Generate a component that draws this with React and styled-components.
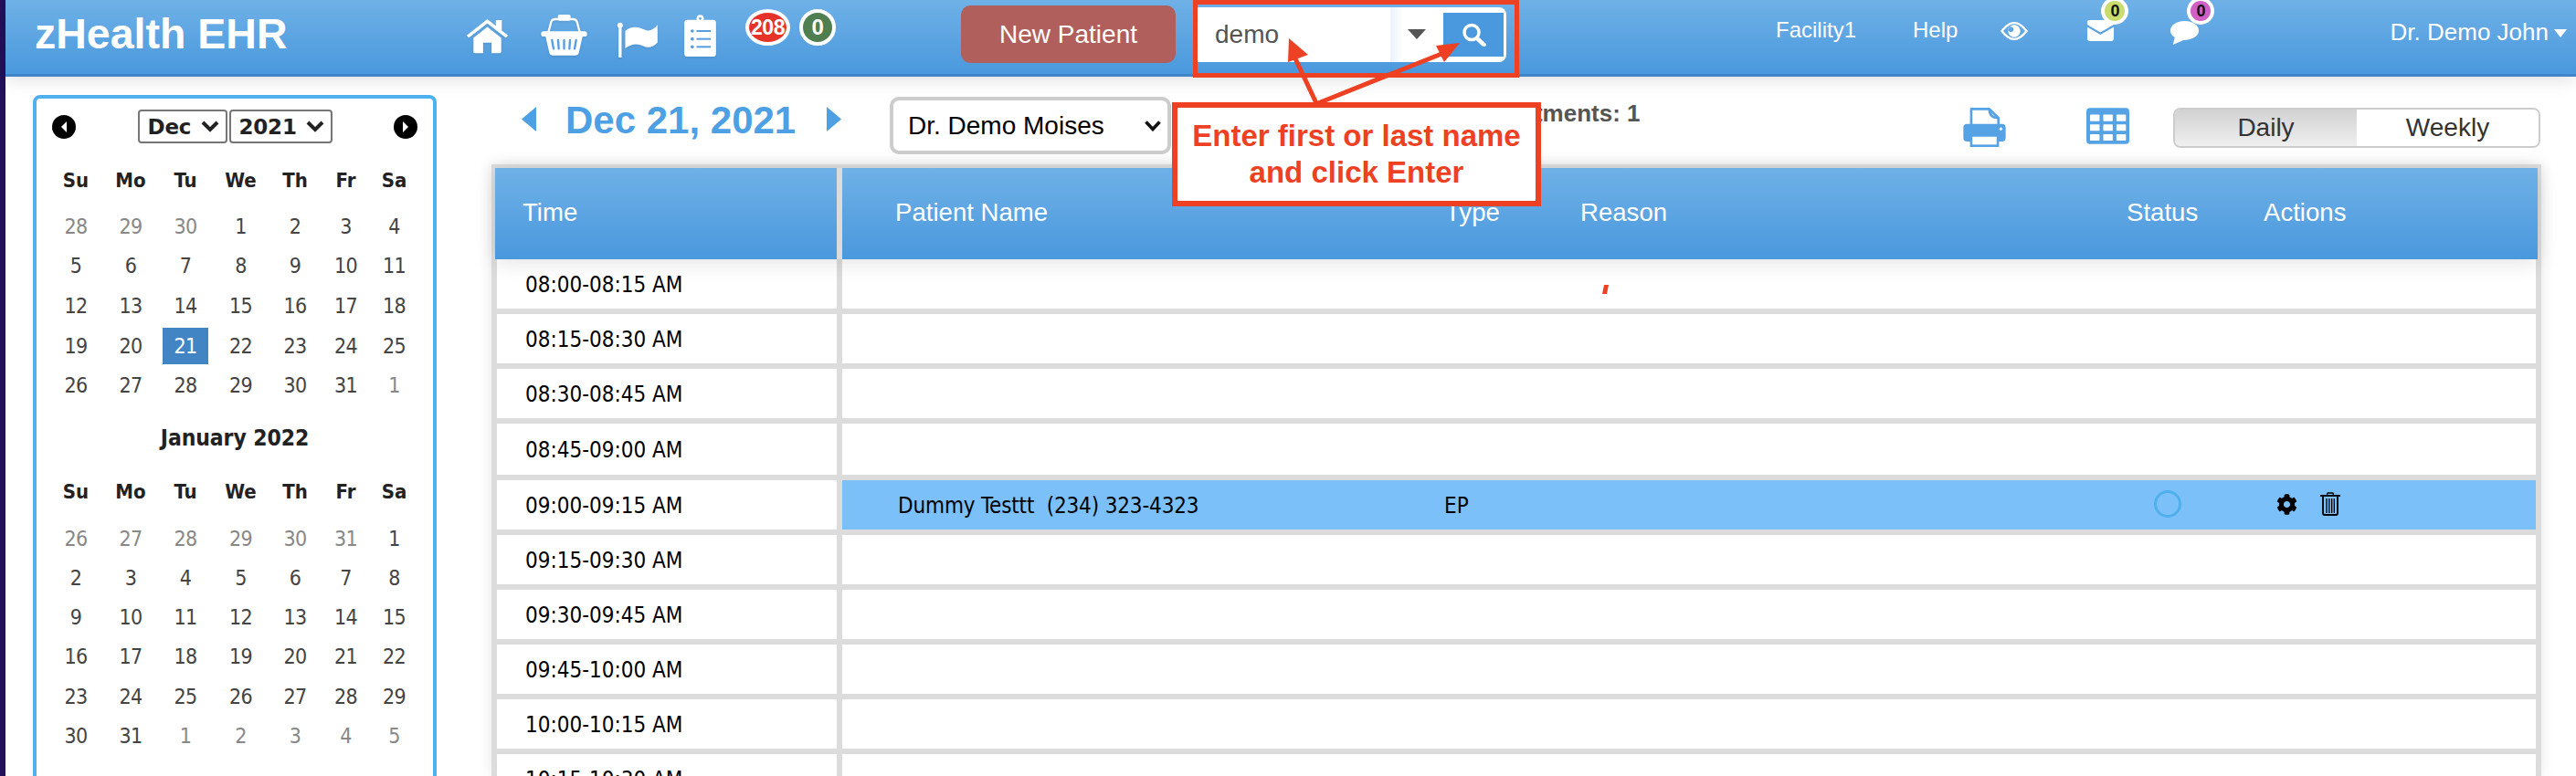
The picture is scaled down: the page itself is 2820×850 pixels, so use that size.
import React from "react";
import styled, { createGlobalStyle } from "styled-components";
import { FaCog } from "react-icons/fa";

const Global = createGlobalStyle`
  html, body { margin: 0; padding: 0; background: #fff; overflow: hidden; }
  * { box-sizing: border-box; }
`;
const SANS = `"Liberation Sans", Arial, sans-serif`;
const TAHOMA = `"DejaVu Sans Condensed", "DejaVu Sans", sans-serif`;
const BAR = `linear-gradient(to bottom, #6fb1e7 0%, #4a98dd 100%)`;

const Page = styled.div`
  position: relative; width: 2820px; height: 850px; overflow: hidden;
  display: flex; font-family: ${SANS}; background: #fff;
`;
const Strip = styled.div`width: 6px; flex: none; background: #22105c;`;
const Main = styled.div`flex: 1; display: flex; flex-direction: column; min-width: 0;`;

/* ---------- top bar ---------- */
const TopBar = styled.header`
  position: relative; z-index: 2; height: 84px; flex: none; display: flex; align-items: flex-start;
  background: ${BAR}; border-bottom: 3px solid #4085c9; box-shadow: 0 3px 18px rgba(0,0,0,.13);
  color: #fff;
`;
const Brand = styled.div`
  width: 498px; flex: none; padding: 10px 0 0 32px; font-size: 46.5px; line-height: 54px; font-weight: 700; white-space: nowrap;
`;
const IconNav = styled.nav`width: 546px; flex: none; display: flex; align-items: flex-start; padding-left: 6px;`;
const NavIcon = styled.a`display: block; flex: none; margin-left: ${p => p.$ml}px; margin-top: ${p => p.$mt}px; line-height: 0;
  svg { display: block; filter: drop-shadow(0 1px 1px rgba(0,0,0,.1)); }`;
const CountBadge = styled.span`
  flex: none; height: 40px; width: ${p => p.$w}px; margin-top: 10px; margin-left: ${p => p.$ml}px; border-radius: 50%;
  border: 4px solid #fff; background: ${p => p.$bg}; color: #fff; font-size: ${p => p.$fs}px; font-weight: 700;
  display: flex; align-items: center; justify-content: center; letter-spacing: -.5px;
`;
const NewPatient = styled.button`
  flex: none; width: 235px; height: 63px; margin: 6px 0 0 2px; border: 0; border-radius: 10px; background: #b05f5d;
  color: #fff; font: 400 28px ${SANS};
`;
const SearchBox = styled.div`
  flex: none; width: 338px; height: 60px; margin: 8px 0 0 24px; display: flex; background: #fff;
  border-radius: 0 8px 8px 0; padding-right: 3px;
`;
const SearchInput = styled.input`
  width: 211px; height: 60px; flex: none; border: 0; outline: 0; background: #fff; padding: 0 0 0 19px;
  font: 400 28px ${SANS}; color: #555;
`;
const SearchCaret = styled.div`
  width: 58px; flex: none; display: flex; align-items: center; justify-content: center; padding-left: 0;
  background: linear-gradient(to right, #eaf3fb 0, #fff 14px);
  &::after { content: ""; border-style: solid; border-width: 11px 10px 0 10px; border-color: #555 transparent transparent; margin-top: -1px; }
`;
const SearchButton = styled.button`
  width: 66px; height: 48px; margin-top: 6px; flex: none; border: 0; padding: 0; background: #4a98dd;
  display: flex; align-items: center; justify-content: center;
`;
const TopLinks = styled.div`flex: none; margin-left: 295px; display: flex; align-items: flex-start;`;
const TopLink = styled.a`font-size: 24px; line-height: 28px; margin-top: 19px; margin-left: ${p => p.$ml || 0}px; color: #fff; white-space: nowrap;`;
const TopIcon = styled.div`
  position: relative; flex: none; width: ${p => p.$w}px; margin-left: ${p => p.$ml}px; margin-top: ${p => p.$mt}px; line-height: 0;
`;
const DotBadge = styled.span`
  position: absolute; top: ${p => p.$top}px; left: ${p => p.$left}px; width: 30px; height: 30px; border-radius: 50%;
  border: 4px solid #fff; background: ${p => p.$bg}; color: #111; font-size: 18px; line-height: 22px; font-weight: 700; text-align: center;
`;
const UserMenu = styled.div`
  margin-left: auto; margin-right: 10px; display: flex; align-items: center; margin-top: 20px; font-size: 26px; line-height: 30px; white-space: nowrap;
  &::after { content: ""; margin-left: 6px; margin-top: 3px; border-style: solid; border-width: 9px 7.5px 0 7.5px; border-color: #fff transparent transparent; }
`;

/* ---------- body ---------- */
const Body = styled.div`flex: 1; min-height: 0; display: flex; align-items: flex-start;`;
const SideCol = styled.aside`width: 532px; flex: none; padding: 20px 0 0 30px;`;
const Calendar = styled.div`
  width: 442px; height: 800px; border: 4px solid #4fb0ee; border-radius: 8px; background: #fff; padding-top: 12px;
  font-family: ${TAHOMA};
`;
const CalNav = styled.div`display: flex; align-items: center; height: 37px; padding: 0 0 0 17px;`;
const CalArrow = styled.span`
  flex: none; width: 26px; height: 26px; border-radius: 50%; background: #000; display: flex; align-items: center; justify-content: center;
  margin: ${p => p.$m};
  &::after { content: ""; border-style: solid; border-width: 6.5px ${p => p.$next ? "0 6.5px 6.5px" : "6.5px 6.5px 0"}; border-color: transparent ${p => p.$next ? "transparent transparent #fff" : "#fff transparent transparent"}; }
`;
const MonthWrap = styled.label`
  position: relative; flex: none; display: block; width: ${p => p.$w}px; height: 37px; margin-left: ${p => p.$ml}px;
`;
const MonthSelect = styled.select`
  appearance: none; width: 100%; height: 100%; background: #fff; border: 2px solid #767676; border-radius: 4px;
  padding: 0 0 0 9px; font: 700 23px "DejaVu Sans", sans-serif; color: #222; letter-spacing: -.2px;
`;
const Chevron = styled.svg`position: absolute; top: ${p => p.$top}px; right: ${p => p.$right}px; pointer-events: none;`;
const Grid = styled.div`
  display: grid; grid-template-columns: 60px 60px 60px 61px 58px 53px 53px; padding-left: 13px;
  justify-items: center; align-items: center;
`;
const WeekHead = styled(Grid)`
  height: 40px; margin-top: ${p => p.$mt}px; font-weight: 700; font-size: 22px; color: #222;
`;
const DayGrid = styled(Grid)`
  grid-auto-rows: ${p => p.$rh}px; margin-top: ${p => p.$mt}px; font-size: 23px; letter-spacing: -.6px;
`;
const Day = styled.span`
  color: ${p => (p.$sel ? "#fff" : p.$out ? "#888" : "#444")};
  background: ${p => (p.$sel ? "#4285c5" : "transparent")};
  width: 50px; height: 40px; line-height: 40px; text-align: center; display: block;
`;
const MonthTitle = styled.div`
  height: 40px; line-height: 40px; margin-top: 16px; font-size: 24.5px; font-weight: 700; color: #222; text-align: center; padding-left: 0; letter-spacing: -.1px;
`;

const Content = styled.section`width: 2244px; flex: none;`;
const Toolbar = styled.div`height: 96px; display: flex; align-items: flex-start; padding-top: 20px; margin-top: 0;`;
const DateArrow = styled.svg`flex: none; margin-left: ${p => p.$ml}px; margin-top: 13px;`;
const DateTitle = styled.h1`
  flex: none; width: 248px; margin: 5px 0 0 32px; font: 700 42px/46px ${SANS}; color: #4ea0e4; white-space: nowrap;
`;
const DoctorWrap = styled.label`position: relative; display: block; flex: none; width: 308px; height: 63px; margin: 2px 0 0 53px;`;
const DoctorSelect = styled.select`
  appearance: none; width: 100%; height: 100%; background: #fff; border: 4px solid #ccc; border-radius: 10px;
  padding: 0 0 0 16px; font: 400 28px ${SANS}; color: #000;
`;
const Total = styled.div`
  flex: none; margin: 5px 0 0 242px; width: 269px; font: 700 26px/30px ${SANS}; color: #555; white-space: nowrap;
`;
const ToolIcon = styled.a`flex: none; display: block; line-height: 0; margin-left: ${p => p.$ml}px; margin-top: 14px;`;
const Toggle = styled.div`
  flex: none; width: 402px; height: 44px; margin: 14px 0 0 48px; display: flex; border: 2px solid #ccc; border-radius: 8px; overflow: hidden;
`;
const ToggleItem = styled.div`
  flex: 1; display: flex; align-items: center; justify-content: center; font-size: 28px; color: #333;
  background: ${p => (p.$on ? "linear-gradient(to bottom,#d2d2d2,#efefef)" : "#fff")};
`;

const Frame = styled.div`
  background: #dcdcdc; padding: 4px 4px 0; height: 670px; box-shadow: 0 0 14px rgba(0,0,0,.1);
`;
const HeadRow = styled.div`
  position: relative; z-index: 1; display: grid; grid-template-columns: 374px 1fr; column-gap: 6px; height: 100px;
  box-shadow: 0 3px 22px rgba(0,0,0,.12); font-size: 27.6px; color: #fff;
`;
const HeadCell = styled.div`
  background: ${BAR}; display: ${p => (p.$cols ? "grid" : "flex")}; align-items: center; padding-left: ${p => p.$pl}px; padding-bottom: 2px;
  ${p => p.$cols && `grid-template-columns: 602px 148px 598px 150px 1fr;`}
`;
const Slots = styled.div`display: flex; flex-direction: column; row-gap: 6px; margin: 0 -2px 0 2px; width: 2232px;`;
const Slot = styled.div`
  display: grid; grid-template-columns: 372px 1fr; column-gap: 6px; height: ${p => p.$h}px; flex: none;
  font-family: ${TAHOMA}; font-size: 24px; color: #000;
`;
const TimeCell = styled.div`background: #fff; display: flex; align-items: center; padding: 2px 0 0 31px; white-space: nowrap;`;
const SlotCell = styled.div`
  background: ${p => (p.$busy ? "#7cc0f9" : "#fff")}; display: grid; align-items: center; padding: 2px 0 0 61px;
  grid-template-columns: 598px 747px 164px 1fr; white-space: pre; color: #000;
`;
const PatientLine = styled.span`letter-spacing: -.15px;`;
const Ring = styled.span`display: block; width: 30px; height: 30px; border-radius: 50%; border: 3px solid #4fb0ee; margin: -4px 0 0 30px;`;
const Actions = styled.div`display: flex; align-items: center; gap: 25px; margin: -4px 0 0 0; font-size: 23px; line-height: 0;`;

/* ---------- annotation overlays ---------- */
const Highlight = styled.div`
  position: absolute; left: 1306px; top: 0; width: 357px; height: 85px; border: 5px solid #ee4023; pointer-events: none; z-index: 5;
`;
const Callout = styled.div`
  position: absolute; left: 1283px; top: 112px; width: 404px; height: 114px; z-index: 6; background: #fff; border: 6px solid #ee4023;
  display: flex; align-items: center; justify-content: center; text-align: center;
  color: #ee4023; font: 700 33px/40px ${SANS};
`;
const ArrowLayer = styled.svg`position: absolute; left: 0; top: 0; z-index: 7; pointer-events: none;`;

/* ---------- icons ---------- */
const HomeIcon = () => (
  <svg width="47" height="38" viewBox="0 0 140 115" fill="#fff">
    <rect x="98" y="3" width="20" height="34" />
    <path d="M5 58 L70 7 L135 58" fill="none" stroke="#fff" strokeWidth="11" />
    <path d="M24 62 L70 26 L116 62 V108 Q116 113 111 113 H84 V78 H56 V113 H29 Q24 113 24 108 Z" />
  </svg>
);
const BasketIcon = () => (
  <svg width="51" height="45" viewBox="0 0 151 135" fill="#fff">
    <path d="M24 58 L33 24 Q36 15 46 15 H105 Q115 15 118 24 L127 58" fill="none" stroke="#fff" strokeWidth="7" />
    <rect x="55" y="0" width="42" height="20" rx="6" />
    <rect x="0" y="55" width="151" height="17" rx="8.5" />
    <path d="M14 68 H137 L124 125 Q122 134 112 134 H39 Q29 134 27 125 Z" />
    <g stroke="#559fe1" strokeWidth="7" strokeLinecap="round">
      <path d="M36 84 L41 112 M56 84 L58 112 M75.5 84 V112 M95 84 L93 112 M115 84 L110 112" />
    </g>
  </svg>
);
const FlagIcon = () => (
  <svg width="45" height="39" viewBox="0 0 135 118" fill="#fff">
    <rect x="6" y="10" width="10" height="108" />
    <circle cx="11" cy="11" r="9" />
    <path d="M28 30 C48 12 72 16 92 26 C108 33 122 26 135 10 V68 C122 84 104 88 88 80 C68 70 48 72 28 88 Z" />
  </svg>
);
const ClipIcon = () => (
  <svg width="35" height="46" viewBox="0 0 104 138">
    <rect y="17" width="104" height="121" rx="10" fill="#fff" />
    <circle cx="52" cy="13" r="12" fill="#fff" />
    <circle cx="52" cy="13" r="4" fill="#5ea5e3" />
    <g fill="#559fe1">
      <circle cx="26" cy="54" r="5.5" /><circle cx="26" cy="80" r="5.5" /><circle cx="26" cy="106" r="5.5" />
      <rect x="40" y="51" width="47" height="6" /><rect x="40" y="77" width="47" height="6" /><rect x="40" y="103" width="47" height="6" />
    </g>
  </svg>
);
const SearchIcon = () => (
  <svg width="27" height="26" viewBox="0 0 27 26" fill="none" stroke="#fff">
    <circle cx="11" cy="10.5" r="8" strokeWidth="3.5" />
    <path d="M17 17 L24.5 24" strokeWidth="4.5" strokeLinecap="round" />
  </svg>
);
const EyeIcon = () => (
  <svg width="30" height="20" viewBox="0 0 90 60" fill="#fff">
    <path fillRule="evenodd" d="M0 30 C16 9 30 0 45 0 C60 0 74 9 90 30 C74 51 60 60 45 60 C30 60 16 51 0 30 Z M9 30 C22 45 33 53 45 53 C57 53 68 45 81 30 C68 15 57 7 45 7 C33 7 22 15 9 30 Z" />
    <path fillRule="evenodd" d="M45 10 A20 20 0 1 1 44.9 10 Z M34 16 A9 9 0 1 0 34.1 16 Z" />
  </svg>
);
const MailIcon = () => (
  <svg width="29" height="23" viewBox="0 0 85 67">
    <path d="M0 6 Q0 0 6 0 H85 V60 Q85 67 78 67 H7 Q0 67 0 60 Z" fill="#fff" />
    <path d="M-2 17 L42 43 L87 17" fill="none" stroke="#57a0e2" strokeWidth="6" />
  </svg>
);
const ChatIcon = () => (
  <svg width="31" height="26" viewBox="0 0 92 77" fill="#fff">
    <ellipse cx="46" cy="31" rx="46" ry="31" />
    <path d="M15 50 L8 77 L48 60 Z" />
  </svg>
);
const PrintIcon = () => (
  <svg width="47" height="43" viewBox="0 0 140 130">
    <path d="M26 60 V4 H86 L116 34 V60 Z" fill="#fff" stroke="#55a2e4" strokeWidth="8" strokeLinejoin="round" />
    <path d="M86 4 C86 24 96 34 116 34" fill="none" stroke="#55a2e4" strokeWidth="8" />
    <rect x="0" y="54" width="140" height="58" rx="12" fill="#55a2e4" />
    <rect x="26" y="92" width="88" height="34" fill="#fff" stroke="#55a2e4" strokeWidth="8" />
    <circle cx="124" cy="70" r="5" fill="#fff" />
  </svg>
);
const GridIcon = () => (
  <svg width="47" height="40" viewBox="0 0 140 118">
    <rect width="140" height="118" rx="12" fill="#55a2e4" />
    <g fill="#fff">
      {[22, 54, 86].map(y => [12, 55, 98].map(x => <rect key={x + "-" + y} x={x} y={y} width="31" height="21" rx="2" />))}
    </g>
  </svg>
);
const TrashIcon = () => (
  <svg width="22" height="26" viewBox="0 0 66 76" fill="none" stroke="#000">
    <path d="M0 11 H66" strokeWidth="5.5" />
    <path d="M23 10 V5 Q23 2 26 2 H40 Q43 2 43 5 V10" strokeWidth="4.5" />
    <path d="M9 14 V68 Q9 74 15 74 H51 Q57 74 57 68 V14" strokeWidth="5.5" />
    <path d="M21 20 V68 M29.5 20 V68 M38 20 V68 M46 20 V68" strokeWidth="4" />
  </svg>
);

const WEEK = ["Su", "Mo", "Tu", "We", "Th", "Fr", "Sa"];
const DEC = [[28,1],[29,1],[30,1],1,2,3,4,5,6,7,8,9,10,11,12,13,14,15,16,17,18,19,20,21,22,23,24,25,26,27,28,29,30,31,[1,1]];
const JAN = [[26,1],[27,1],[28,1],[29,1],[30,1],[31,1],1,2,3,4,5,6,7,8,9,10,11,12,13,14,15,16,17,18,19,20,21,22,23,24,25,26,27,28,29,30,31,[1,1],[2,1],[3,1],[4,1],[5,1]];

const Days = ({ list, sel, ...rest }) => (
  <DayGrid {...rest}>
    {list.map((d, i) => {
      const out = Array.isArray(d);
      const n = out ? d[0] : d;
      return <Day key={i} $out={out} $sel={!out && n === sel}>{n}</Day>;
    })}
  </DayGrid>
);
const Week = ({ mt }) => <WeekHead $mt={mt}>{WEEK.map(w => <span key={w}>{w}</span>)}</WeekHead>;

const SLOTS = [
  ["08:00-08:15 AM", 54], ["08:15-08:30 AM", 54], ["08:30-08:45 AM", 54], ["08:45-09:00 AM", 56],
  ["09:00-09:15 AM", 54, true], ["09:15-09:30 AM", 54], ["09:30-09:45 AM", 54], ["09:45-10:00 AM", 54],
  ["10:00-10:15 AM", 54], ["10:15-10:30 AM", 54],
];

export default function App() {
  return (
    <Page>
      <Global />
      <Strip />
      <Main>
        <TopBar>
          <Brand>zHealth EHR</Brand>
          <IconNav>
            <NavIcon $ml={0} $mt={21}><HomeIcon /></NavIcon>
            <NavIcon $ml={35} $mt={16}><BasketIcon /></NavIcon>
            <NavIcon $ml={32} $mt={24}><FlagIcon /></NavIcon>
            <NavIcon $ml={29} $mt={16}><ClipIcon /></NavIcon>
            <CountBadge $w={49} $ml={32} $bg="#e5332a" $fs={23}>208</CountBadge>
            <CountBadge $w={40} $ml={10} $bg="#4f7f50" $fs={24}>0</CountBadge>
          </IconNav>
          <NewPatient>New Patient</NewPatient>
          <SearchBox>
            <SearchInput defaultValue="demo" />
            <SearchCaret />
            <SearchButton aria-label="Search"><SearchIcon /></SearchButton>
          </SearchBox>
          <TopLinks>
            <TopLink>Facility1</TopLink>
            <TopLink $ml={62}>Help</TopLink>
            <TopIcon $w={30} $ml={47} $mt={24}><EyeIcon /></TopIcon>
            <TopIcon $w={29} $ml={65} $mt={22}>
              <MailIcon />
              <DotBadge $top={-25} $left={15} $bg="#c9dc6e">0</DotBadge>
            </TopIcon>
            <TopIcon $w={31} $ml={62} $mt={23}>
              <ChatIcon />
              <DotBadge $top={-26} $left={18} $bg="#cf5fc5">0</DotBadge>
            </TopIcon>
          </TopLinks>
          <UserMenu>Dr. Demo John</UserMenu>
        </TopBar>

        <Body>
          <SideCol>
            <Calendar>
              <CalNav>
                <CalArrow />
                <MonthWrap $w={98.5} $ml={67.5}>
                  <MonthSelect defaultValue="Dec"><option>Dec</option></MonthSelect>
                  <Chevron $top={12} $right={9} width="20" height="13" viewBox="0 0 20 13" fill="none" stroke="#222" strokeWidth="4"><path d="M2 2 L10 10 L18 2" /></Chevron>
                </MonthWrap>
                <MonthWrap $w={113} $ml={1.5}>
                  <MonthSelect defaultValue="2021"><option>2021</option></MonthSelect>
                  <Chevron $top={12} $right={9} width="20" height="13" viewBox="0 0 20 13" fill="none" stroke="#222" strokeWidth="4"><path d="M2 2 L10 10 L18 2" /></Chevron>
                </MonthWrap>
                <CalArrow $next $m="0 0 0 67.5px" />
              </CalNav>
              <Week mt={20} />
              <Days list={DEC} sel={21} $rh={43.6} $mt={9} />
              <MonthTitle>January 2022</MonthTitle>
              <Week mt={18.6} />
              <Days list={JAN} $rh={43.3} $mt={9.4} />
            </Calendar>
          </SideCol>

          <Content>
            <Toolbar>
              <DateArrow $ml={33} width="16" height="27" viewBox="0 0 16 27" fill="#4ea0e4"><path d="M16 0 V27 L0 13.5 Z" /></DateArrow>
              <DateTitle>Dec 21, 2021</DateTitle>
              <DateArrow $ml={38} width="16" height="27" viewBox="0 0 16 27" fill="#4ea0e4"><path d="M0 0 V27 L16 13.5 Z" /></DateArrow>
              <DoctorWrap>
                <DoctorSelect defaultValue="Dr. Demo Moises"><option>Dr. Demo Moises</option></DoctorSelect>
                <Chevron $top={26} $right={11} width="18" height="12" viewBox="0 0 18 12" fill="none" stroke="#111" strokeWidth="3.6"><path d="M1.5 1.5 L9 9.5 L16.5 1.5" /></Chevron>
              </DoctorWrap>
              <Total>Total Appointments: 1</Total>
              <ToolIcon $ml={356}><PrintIcon /></ToolIcon>
              <ToolIcon $ml={88}><GridIcon /></ToolIcon>
              <Toggle>
                <ToggleItem $on>Daily</ToggleItem>
                <ToggleItem>Weekly</ToggleItem>
              </Toggle>
            </Toolbar>

            <Frame>
              <HeadRow>
                <HeadCell $pl={30}>Time</HeadCell>
                <HeadCell $cols $pl={58}>
                  <span>Patient Name</span><span>Type</span><span>Reason</span><span>Status</span><span>Actions</span>
                </HeadCell>
              </HeadRow>
              <Slots>
                {SLOTS.map(([t, h, busy]) => (
                  <Slot key={t} $h={h}>
                    <TimeCell>{t}</TimeCell>
                    <SlotCell $busy={busy}>
                      {busy && <>
                        <PatientLine>Dummy Testtt  (234) 323-4323</PatientLine>
                        <span>EP</span>
                        <Ring />
                        <Actions><FaCog size={23} color="#000" /><TrashIcon /></Actions>
                      </>}
                    </SlotCell>
                  </Slot>
                ))}
              </Slots>
            </Frame>
          </Content>
        </Body>
      </Main>

      <Highlight />
      <Callout>Enter first or last name<br />and click Enter</Callout>
      <ArrowLayer width="2820" height="850" viewBox="0 0 2820 850" fill="#ee4023" stroke="none">
        <path d="M1441 113 L1417 62" stroke="#ee4023" strokeWidth="5" fill="none" />
        <path d="M1411 42 L1432 60 L1410 68 Z" />
        <path d="M1443 113 L1578 59" stroke="#ee4023" strokeWidth="5" fill="none" />
        <path d="M1598 47 L1581 68 L1572 50 Z" />
        <path d="M1756 312 L1761 312 L1759 322 L1754 322 Z" />
      </ArrowLayer>
    </Page>
  );
}
